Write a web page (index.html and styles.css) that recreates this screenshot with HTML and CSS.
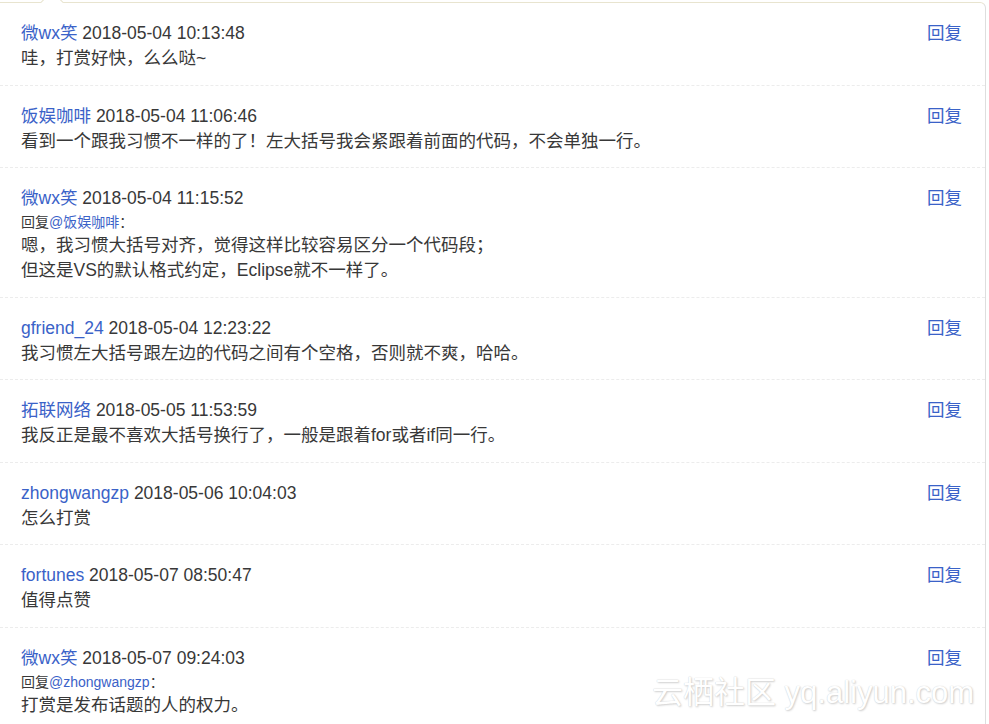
FILE: index.html
```html
<!DOCTYPE html>
<html lang="zh-CN">
<head>
<meta charset="utf-8">
<title>评论</title>
<link rel="stylesheet" href="styles.css">
</head>
<body>
<div class="panel">
  <ul class="comments">
    <li class="comment">
      <div class="body">
        <div class="meta"><a class="user">微wx笑</a> <span class="time">2018-05-04 10:13:48</span></div>
        <div class="text">哇，打赏好快，么么哒~</div>
      </div>
      <a class="reply">回复</a>
    </li>
    <li class="comment">
      <div class="body">
        <div class="meta"><a class="user">饭娱咖啡</a> <span class="time">2018-05-04 11:06:46</span></div>
        <div class="text">看到一个跟我习惯不一样的了！左大括号我会紧跟着前面的代码，不会单独一行。</div>
      </div>
      <a class="reply">回复</a>
    </li>
    <li class="comment">
      <div class="body">
        <div class="meta"><a class="user">微wx笑</a> <span class="time">2018-05-04 11:15:52</span></div>
        <div class="to">回复<a class="user">@饭娱咖啡</a>：</div>
        <div class="text">嗯，我习惯大括号对齐，觉得这样比较容易区分一个代码段；<br>但这是VS的默认格式约定，Eclipse就不一样了。</div>
      </div>
      <a class="reply">回复</a>
    </li>
    <li class="comment">
      <div class="body">
        <div class="meta"><a class="user">gfriend_24</a> <span class="time">2018-05-04 12:23:22</span></div>
        <div class="text">我习惯左大括号跟左边的代码之间有个空格，否则就不爽，哈哈。</div>
      </div>
      <a class="reply">回复</a>
    </li>
    <li class="comment">
      <div class="body">
        <div class="meta"><a class="user">拓联网络</a> <span class="time">2018-05-05 11:53:59</span></div>
        <div class="text">我反正是最不喜欢大括号换行了，一般是跟着for或者if同一行。</div>
      </div>
      <a class="reply">回复</a>
    </li>
    <li class="comment">
      <div class="body">
        <div class="meta"><a class="user">zhongwangzp</a> <span class="time">2018-05-06 10:04:03</span></div>
        <div class="text">怎么打赏</div>
      </div>
      <a class="reply">回复</a>
    </li>
    <li class="comment">
      <div class="body">
        <div class="meta"><a class="user">fortunes</a> <span class="time">2018-05-07 08:50:47</span></div>
        <div class="text">值得点赞</div>
      </div>
      <a class="reply">回复</a>
    </li>
    <li class="comment">
      <div class="body">
        <div class="meta"><a class="user">微wx笑</a> <span class="time">2018-05-07 09:24:03</span></div>
        <div class="to">回复<a class="user">@zhongwangzp</a>：</div>
        <div class="text">打赏是发布话题的人的权力。</div>
      </div>
      <a class="reply">回复</a>
    </li>
  </ul>
</div>
<div class="watermark">云栖社区 yq.aliyun.com</div>
</body>
</html>
```

FILE: styles.css
```css
html, body {
  margin: 0;
  padding: 0;
  background: #fff;
  overflow: hidden;
}
body {
  font-family: "Liberation Sans", "Noto Sans CJK SC", sans-serif;
  color: #333;
  width: 989px;
  height: 724px;
}
.panel {
  position: relative;
  margin: 2px 0 0 -1px;
  width: 987px;
  border: 1px solid #e8e4cf;
  border-right-color: #dedede;
  border-bottom: none;
  border-radius: 0 6px 0 0;
  background: #fff;
  box-sizing: border-box;
}
.panel::before {
  content: "";
  position: absolute;
  left: 44px;
  top: -9px;
  width: 15px;
  height: 15px;
  background: #fff;
  border-top: 1px solid #e8e4cf;
  border-left: 1px solid #e8e4cf;
  transform: rotate(45deg);
}
.comments {
  list-style: none;
  margin: 0;
  padding: 0;
}
.comment {
  display: flex;
  align-items: flex-start;
  justify-content: space-between;
  padding: 17px 23px 13.5px 21px;
  border-bottom: 1px dashed #ececec;
}
.body {
  flex: 1;
}
.meta {
  font-size: 17.5px;
  line-height: 26px;
  white-space: nowrap;
}
.user {
  color: #3a62c8;
  text-decoration: none;
}
.time {
  color: #383838;
}
.to {
  font-size: 14px;
  line-height: 22px;
  color: #383838;
}
.text {
  font-size: 17.5px;
  line-height: 25px;
  color: #383838;
}
.reply {
  font-size: 17.5px;
  line-height: 26px;
  color: #3a62c8;
  text-decoration: none;
}
.watermark {
  position: absolute;
  left: 652px;
  top: 673px;
  font-family: "Liberation Sans", "Noto Sans CJK SC", sans-serif;
  font-size: 31px;
  line-height: 40px;
  color: #fff;
  white-space: nowrap;
  text-shadow: 0 0 1px #c8c8c8, 1px 1px 2px #d0d0d0;
}
```
